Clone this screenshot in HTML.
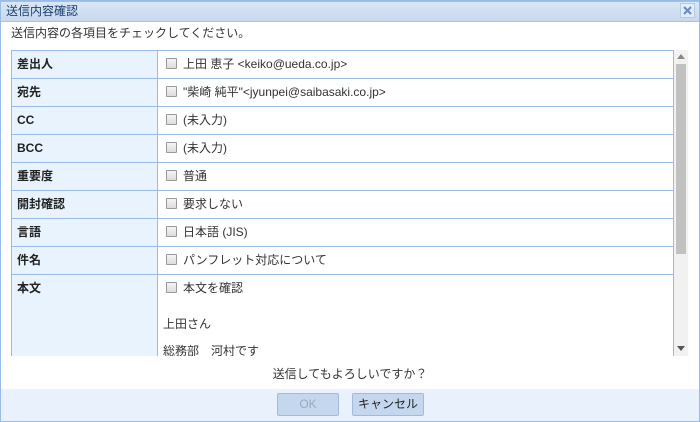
<!DOCTYPE html>
<html><head><meta charset="utf-8"><style>
*{box-sizing:border-box;margin:0;padding:0}
body{width:700px;height:422px;overflow:hidden;background:#fff;font-family:"Liberation Sans","Noto Sans CJK JP",sans-serif;font-size:12px;color:#333}
.win{position:absolute;left:0;top:0;width:700px;height:422px;border:1px solid #99bbe8}
.title{position:absolute;left:0;top:0;width:698px;height:21px;background:linear-gradient(#dae6f4,#c7d9ee);border-top:1px solid #a9bfd6;border-bottom:1px solid #a9c3e3;color:#1e3f6e;font-size:12px;line-height:18px;padding-left:5px}
.close{position:absolute;right:4px;top:1px;width:15px;height:15px;border:1px solid #b5cbe5;background:#e4edf7}
.inst{position:absolute;left:10px;top:24px;font-size:12px;line-height:16px;color:#333}
.tbl{position:absolute;left:10px;top:49px;width:663px;height:306px;overflow:hidden;border-left:1px solid #99bbe8;border-right:1px solid #99bbe8;border-top:1px solid #99bbe8}
.row{display:flex;height:28px;border-bottom:1px solid #99bbe8;line-height:16px}
.lab{width:146px;background:#e8f3fe;border-right:1px solid #99bbe8;font-weight:bold;padding:5px 0 0 5px;color:#222}
.val{padding:5px 0 0 8px;display:flex;align-items:flex-start}
.cb{width:11px;height:11px;border:1px solid #999;background:linear-gradient(#f4f4f4,#dcdcdc);margin:2px 6px 0 0;border-radius:1px}
.sb{position:absolute;left:673px;top:49px;width:14px;height:306px;background:#f1f1f1}
.thumb{position:absolute;left:2px;top:14px;width:10px;height:190px;background:#c1c1c1}
.q{position:absolute;left:0;width:698px;top:365px;line-height:16px;text-align:center;color:#333}
.foot{position:absolute;left:0;top:388px;width:698px;height:32px;background:#e9f2fc}
.btn{position:absolute;top:4px;height:23px;border:1px solid #a3bad9;border-radius:2px;background:#c4d7ef;text-align:center;line-height:21px;font-size:12px}
</style></head><body>
<div class="win">
<div class="title">送信内容確認
<div class="close"><svg width="13" height="13" viewBox="0 0 13 13"><path d="M3 3L10 10M10 3L3 10" stroke="#6a8fc4" stroke-width="2.2"/></svg></div></div>
<div class="inst">送信内容の各項目をチェックしてください。</div>
<div class="tbl">
<div class="row"><div class="lab">差出人</div><div class="val"><span class="cb"></span>上田 恵子 &lt;keiko@ueda.co.jp&gt;</div></div>
<div class="row"><div class="lab">宛先</div><div class="val"><span class="cb"></span>"柴崎 純平"&lt;jyunpei@saibasaki.co.jp&gt;</div></div>
<div class="row"><div class="lab">CC</div><div class="val"><span class="cb"></span>(未入力)</div></div>
<div class="row"><div class="lab">BCC</div><div class="val"><span class="cb"></span>(未入力)</div></div>
<div class="row"><div class="lab">重要度</div><div class="val"><span class="cb"></span>普通</div></div>
<div class="row"><div class="lab">開封確認</div><div class="val"><span class="cb"></span>要求しない</div></div>
<div class="row"><div class="lab">言語</div><div class="val"><span class="cb"></span>日本語 (JIS)</div></div>
<div class="row"><div class="lab">件名</div><div class="val"><span class="cb"></span>パンフレット対応について</div></div>
<div class="row" style="height:120px"><div class="lab">本文</div><div class="val" style="display:block;padding-left:5px"><div style="display:flex;padding-left:3px"><span class="cb"></span>本文を確認</div><div style="margin-top:20px">上田さん</div><div style="margin-top:11px">総務部　河村です</div></div></div>
</div>
<div class="sb"><svg style="position:absolute;left:3px;top:4px" width="8" height="5"><path d="M0 5L4 0L8 5Z" fill="#888"/></svg><div class="thumb"></div><svg style="position:absolute;left:3px;top:296px" width="8" height="5"><path d="M0 0L4 5L8 0Z" fill="#555"/></svg></div>
<div class="q">送信してもよろしいですか？</div>
<div class="foot">
<div class="btn" style="left:276px;width:62px;color:#9aaabb">OK</div>
<div class="btn" style="left:351px;width:72px;color:#222">キャンセル</div>
</div>
</div>
</body></html>
